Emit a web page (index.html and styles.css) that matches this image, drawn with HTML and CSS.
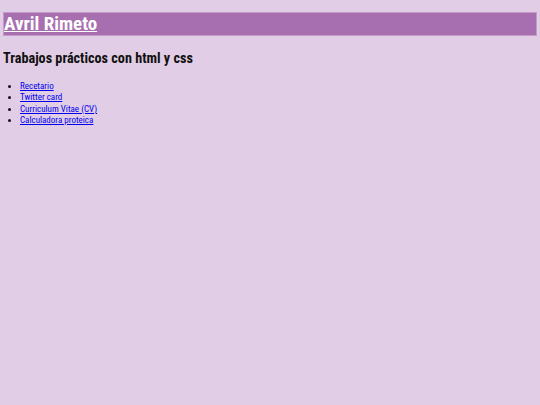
FILE: index.html
```html
<!DOCTYPE html>
<html lang="es">
<head>
<meta charset="utf-8">
<title>Avril Rimeto</title>
<link rel="stylesheet" href="styles.css">
</head>
<body>
<header class="bar">
<h1 class="title"><a href="#">Avril Rimeto</a></h1>
</header>
<main>
<h2 class="subtitle">Trabajos prácticos con html y css</h2>
<ul class="list">
<li><a href="#">Recetario</a></li>
<li><a href="#">Twitter card</a></li>
<li><a href="#">Curriculum Vitae (CV)</a></li>
<li><a href="#">Calculadora proteica</a></li>
</ul>
</main>
</body>
</html>
```
FILE: styles.css
```css
html { background: #e1cde5; }
body {
  margin: 12px 3px 0 3px;
  font-family: "Roboto Condensed", "DejaVu Sans Condensed", sans-serif;
  color: #111;
}
.bar {
  background: #a86fb0;
  border: 1px solid #c49acb;
  height: 22px;
}
.title {
  margin: 0;
  font-size: 19px;
  line-height: 22px;
  font-weight: bold;
}
.title a { color: #fff; }
.subtitle {
  margin: 13px 0 13px 0;
  font-size: 14.2px;
  line-height: 19px;
  font-weight: bold;
}
.list {
  margin: 0;
  padding-left: 17px;
  font-size: 9px;
  line-height: 11.4px;
}
.list a { color: #0000ee; }
```
